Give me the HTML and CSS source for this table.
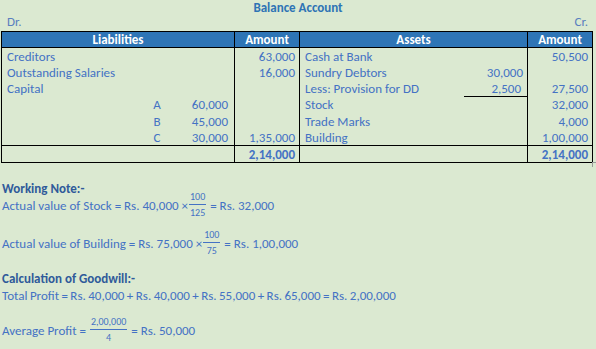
FILE: index.html
```html
<!DOCTYPE html>
<html>
<head>
<meta charset="utf-8">
<link rel="stylesheet" href="styles.css">
</head>
<body>
<div class="page">
  <div class="title">Balance Account</div>
  <div class="drcr"><span>Dr.</span><span>Cr.</span></div>
  <table class="ledger">
    <colgroup>
      <col class="c1"><col class="c2"><col class="c3"><col class="c4"><col class="c5"><col class="c6"><col class="c7">
    </colgroup>
    <thead>
      <tr>
        <th colspan="3" class="grp">Liabilities</th>
        <th class="grp">Amount</th>
        <th colspan="2" class="grp">Assets</th>
        <th class="grp">Amount</th>
      </tr>
    </thead>
    <tbody>
      <tr>
        <td colspan="3" class="lbl">Creditors</td>
        <td class="amt grp">63,000</td>
        <td class="lbl">Cash at Bank</td><td></td>
        <td class="amt grp">50,500</td>
      </tr>
      <tr>
        <td colspan="3" class="lbl">Outstanding Salaries</td>
        <td class="amt grp">16,000</td>
        <td class="lbl">Sundry Debtors</td><td class="amt">30,000</td>
        <td class="amt grp">&nbsp;</td>
      </tr>
      <tr>
        <td colspan="3" class="lbl">Capital</td>
        <td class="amt grp"></td>
        <td class="lbl">Less: Provision for DD</td><td class="amt under">2,500</td>
        <td class="amt grp">27,500</td>
      </tr>
      <tr>
        <td></td><td class="ltr">A</td><td class="amt sub">60,000</td>
        <td class="amt grp"></td>
        <td class="lbl">Stock</td><td></td>
        <td class="amt grp">32,000</td>
      </tr>
      <tr>
        <td></td><td class="ltr">B</td><td class="amt sub">45,000</td>
        <td class="amt grp"></td>
        <td class="lbl">Trade Marks</td><td></td>
        <td class="amt grp">4,000</td>
      </tr>
      <tr>
        <td></td><td class="ltr">C</td><td class="amt sub">30,000</td>
        <td class="amt grp">1,35,000</td>
        <td class="lbl">Building</td><td></td>
        <td class="amt grp">1,00,000</td>
      </tr>
      <tr class="total">
        <td colspan="3" class="grp"></td>
        <td class="amt grp">2,14,000</td>
        <td colspan="2" class="grp"></td>
        <td class="amt grp">2,14,000</td>
      </tr>
    </tbody>
  </table>
  <div class="corner"></div>

  <div class="notes">
    <div class="head">Working Note:-</div>
    <div class="line l1">Actual value of Stock = Rs. 40,000 ×<span class="frac"><span class="num">100</span><span class="den">125</span></span> = Rs. 32,000</div>
    <div class="line l2">Actual value of Building = Rs. 75,000 ×<span class="frac"><span class="num">100</span><span class="den">75</span></span> = Rs. 1,00,000</div>
    <div class="head">Calculation of Goodwill:-</div>
    <div class="line plain">Total Profit = Rs. 40,000 + Rs. 40,000 + Rs. 55,000 + Rs. 65,000 = Rs. 2,00,000</div>
    <div class="line">Average Profit = <span class="frac"><span class="num">2,00,000</span><span class="den">4</span></span> = Rs. 50,000</div>
  </div>
</div>
</body>
</html>
```
FILE: styles.css
```css
html, body {
  margin: 0;
  padding: 0;
  background: #dbe9d1;
}
body {
  font-family: "Carlito", "Lato", sans-serif;
  font-size: 13px;
  color: #4472c4;
  width: 596px;
  height: 349px;
  overflow: hidden;
}
.page {
  padding: 1px 0 0 0;
}
.title {
  text-align: center;
  font-weight: bold;
  color: #2e74b5;
  height: 14px;
  line-height: 14px;
}
.drcr {
  display: flex;
  justify-content: space-between;
  padding: 0 8px 0 7px;
  height: 16px;
  line-height: 14px;
  color: #5a7fbf;
}
.ledger {
  border-collapse: collapse;
  table-layout: fixed;
  width: 592px;
  margin-left: 1px;
}
.c1 { width: 138px; }
.c2 { width: 35px; }
.c3 { width: 60px; }
.c4 { width: 65px; }
.c5 { width: 164px; }
.c6 { width: 64px; }
.c7 { width: 65px; }
.ledger th {
  background: #2e75b6;
  color: #ffffff;
  font-weight: bold;
  text-align: center;
  height: 15px;
  padding: 0;
  line-height: 14px;
  border: 1px solid #000;
}
.ledger td {
  padding: 0 4px;
  height: 16px;
  line-height: 15px;
  white-space: nowrap;
}
.ledger td.grp {
  border-left: 1px solid #000;
  border-right: 1px solid #000;
}
.ledger tbody tr:last-child td {
  border-bottom: 1px solid #000;
}
.ledger td:first-child {
  border-left: 1px solid #000;
}
.ledger td.lbl {
  padding-left: 5px;
}
.amt { text-align: right; }
.ltr { text-align: center; padding-right: 0; }
.sub { padding-right: 6px !important; }
.under { border-bottom: 1px solid #000; padding-right: 6px !important; }
.total td {
  border-top: 1px solid #000;
  font-weight: bold;
}
.corner {
  position: absolute;
  left: 592px;
  top: 162px;
  width: 4px;
  height: 4px;
  border-left: 1px solid #999;
  border-top: 1px solid #999;
}
.notes {
  padding-left: 2px;
  margin-top: 17px;
}
.head {
  font-weight: bold;
  color: #2f5a9a;
  height: 17px;
  line-height: 17px;
}
.line {
  display: flex;
  align-items: center;
  white-space: pre;
  height: 26px;
}
.line.l1 {
  margin-top: -5px;
}
.line.l2 {
  margin-top: 12px;
  margin-bottom: 14px;
}
.line.plain {
  height: 17px;
  line-height: 17px;
  margin-bottom: 13px;
  word-spacing: -0.5px;
}
.frac {
  display: inline-flex;
  flex-direction: column;
  align-items: center;
  font-size: 10px;
  line-height: 10px;
  margin: 0 1px;
}
.num {
  border-bottom: 1px solid #4472c4;
  padding: 0 1px 2px;
}
.den {
  padding-top: 3px;
}
```
